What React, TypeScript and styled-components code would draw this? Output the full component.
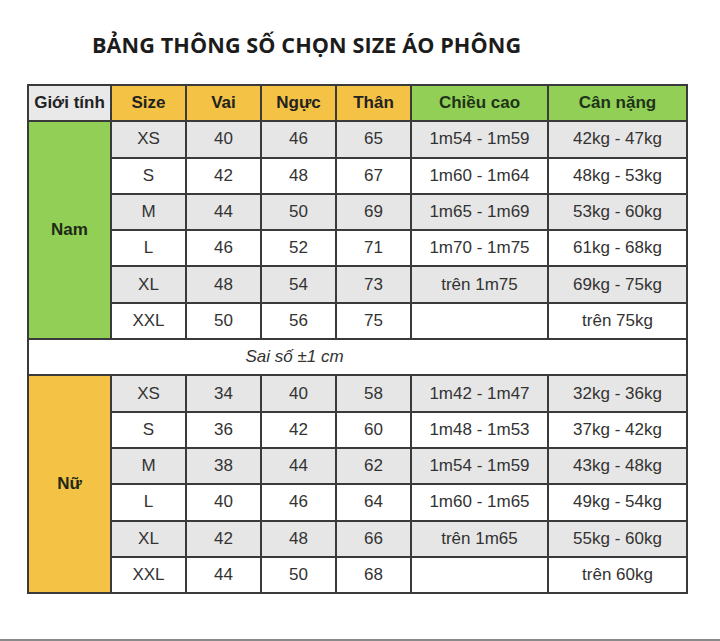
import styled, { createGlobalStyle } from 'styled-components';

const GlobalStyle = createGlobalStyle`
  html, body {
    margin: 0;
    padding: 0;
    background: #ffffff;
  }
`;

const Page = styled.div`
  width: 720px;
  height: 641px;
  box-sizing: border-box;
  padding: 31px 0 0 27px;
  border-bottom: 2px solid #8a8a8a;
  font-family: "Liberation Sans", Arial, sans-serif;
  color: #333;
  overflow: hidden;
`;

const Title = styled.h1`
  margin: 0 0 25px 65px;
  font-family: "Open Sans", "Noto Sans", sans-serif;
  font-size: 21.6px;
  font-weight: 700;
  line-height: 28px;
  color: #1c1c1c;
  letter-spacing: 0.1px;
`;

const Table = styled.table`
  width: 659px;
  table-layout: fixed;
  border-collapse: collapse;
  border: 2px solid #3a3a3a;
`;

const Row = styled.tr`
  height: 36.3px;
`;

type Tone = 'gray' | 'yellow' | 'green' | 'white' | 'light';

const tones: Record<Tone, string> = {
  gray: '#e9e9e9',
  yellow: '#f4c244',
  green: '#92cf56',
  white: '#ffffff',
  light: '#e6e6e6',
};

const Head = styled.th<{ $tone: Tone }>`
  padding: 0;
  border: 2px solid #3a3a3a;
  background: ${(p) => tones[p.$tone]};
  font-size: 17px;
  font-weight: 700;
  color: ${(p) => (p.$tone === 'green' ? '#1f3318' : '#222')};
  text-align: center;
  vertical-align: middle;
`;

const Gender = styled.td<{ $tone: Tone }>`
  padding: 0;
  border: 2px solid #3a3a3a;
  background: ${(p) => tones[p.$tone]};
  font-size: 17px;
  font-weight: 700;
  color: #1e2a16;
  text-align: center;
  vertical-align: middle;
`;

const Cell = styled.td<{ $striped: boolean }>`
  padding: 0;
  border: 2px solid #3a3a3a;
  background: ${(p) => (p.$striped ? tones.light : tones.white)};
  font-size: 17px;
  color: #333;
  text-align: center;
  vertical-align: middle;
  white-space: nowrap;
`;

const Note = styled.td`
  padding: 0 126px 0 0;
  border: 2px solid #3a3a3a;
  background: #fff;
  font-size: 17px;
  font-style: italic;
  color: #333;
  text-align: center;
  vertical-align: middle;
`;

type SizeRow = [string, number, number, number, string, string];

const men: SizeRow[] = [
  ['XS', 40, 46, 65, '1m54 - 1m59', '42kg - 47kg'],
  ['S', 42, 48, 67, '1m60 - 1m64', '48kg - 53kg'],
  ['M', 44, 50, 69, '1m65 - 1m69', '53kg - 60kg'],
  ['L', 46, 52, 71, '1m70 - 1m75', '61kg - 68kg'],
  ['XL', 48, 54, 73, 'trên 1m75', '69kg - 75kg'],
  ['XXL', 50, 56, 75, '', 'trên 75kg'],
];

const women: SizeRow[] = [
  ['XS', 34, 40, 58, '1m42 - 1m47', '32kg - 36kg'],
  ['S', 36, 42, 60, '1m48 - 1m53', '37kg - 42kg'],
  ['M', 38, 44, 62, '1m54 - 1m59', '43kg - 48kg'],
  ['L', 40, 46, 64, '1m60 - 1m65', '49kg - 54kg'],
  ['XL', 42, 48, 66, 'trên 1m65', '55kg - 60kg'],
  ['XXL', 44, 50, 68, '', 'trên 60kg'],
];

const widths = [83, 75, 75, 75, 75, 137, 139];

function Group({ label, tone, rows }: { label: string; tone: Tone; rows: SizeRow[] }) {
  return (
    <>
      {rows.map((r, i) => (
        <Row key={r[0]}>
          {i === 0 && (
            <Gender $tone={tone} rowSpan={rows.length}>
              {label}
            </Gender>
          )}
          {r.map((v, j) => (
            <Cell key={j} $striped={i % 2 === 0}>
              {v}
            </Cell>
          ))}
        </Row>
      ))}
    </>
  );
}

export default function App() {
  return (
    <>
      <GlobalStyle />
      <Page>
        <Title>BẢNG THÔNG SỐ CHỌN SIZE ÁO PHÔNG</Title>
        <Table>
          <colgroup>
            {widths.map((w, i) => (
              <col key={i} style={{ width: w }} />
            ))}
          </colgroup>
          <thead>
            <Row>
              <Head $tone="gray">Giới tính</Head>
              <Head $tone="yellow">Size</Head>
              <Head $tone="yellow">Vai</Head>
              <Head $tone="yellow">Ngực</Head>
              <Head $tone="yellow">Thân</Head>
              <Head $tone="green">Chiều cao</Head>
              <Head $tone="green">Cân nặng</Head>
            </Row>
          </thead>
          <tbody>
            <Group label="Nam" tone="green" rows={men} />
            <Row>
              <Note colSpan={7}>Sai số ±1 cm</Note>
            </Row>
            <Group label="Nữ" tone="yellow" rows={women} />
          </tbody>
        </Table>
      </Page>
    </>
  );
}
